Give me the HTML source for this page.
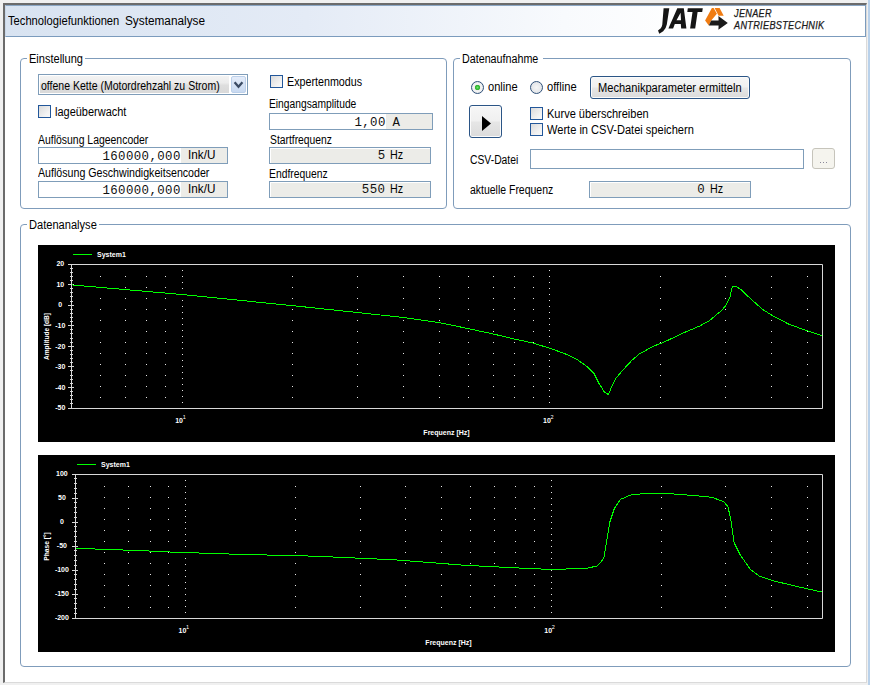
<!DOCTYPE html>
<html><head><meta charset="utf-8">
<style>
*{box-sizing:border-box}
html,body{margin:0;padding:0;width:870px;height:685px;overflow:hidden;background:#f0f0f0;font-family:'Liberation Sans', sans-serif;font-size:11px;color:#000}
.a{position:absolute}
.t{position:absolute;white-space:nowrap;font-size:11px;line-height:13px;color:#000}
.gb{position:absolute;border:1px solid #7f9cbb;border-radius:4px}
.cb{position:absolute;width:13px;height:13px;border:1px solid #22579a;background:linear-gradient(135deg,#dadada,#f3f3f3 70%,#f8f8f8)}
.fld{position:absolute;border:1px solid #7f9db9;background:#fff;height:17px;box-shadow:inset 1px 1px 0 #fff}
.num{position:absolute;font-family:'Liberation Mono', monospace;font-size:13px;line-height:15px;white-space:nowrap;color:#111}
svg text.ax{font:bold 7px 'Liberation Sans', sans-serif;fill:#fff}
svg text.ax2{font:5.5px 'Liberation Sans', sans-serif;fill:#fff}
svg text.axb{font:bold 7px 'Liberation Sans', sans-serif;fill:#fff}
</style></head><body>
<div class="a" style="left:3px;top:3px;width:864px;height:680px;background:#fff;border-left:2px solid #6b6b6b;border-top:2px solid #6b6b6b;border-bottom:1px solid #dadada;border-right:1px solid #dadada"></div>
<div class="a" style="left:868px;top:0;width:2px;height:685px;background:#b9d1ea"></div>
<div class="a" style="left:5px;top:5px;width:861px;height:32px;background:linear-gradient(90deg,#d8e3f1 0%,#e4ebf6 35%,#f8fafd 65%,#ffffff 80%);border:1px solid #7b9bbd;border-left:1px solid #c9d7e8;border-top:1px solid #8aa6c4"></div>
<div class="t" style="left:7.7px;top:13.74px;font-size:12px;line-height:14px;transform:scaleX(0.9319);transform-origin:0 0;">Technologiefunktionen</div>
<div class="t" style="left:124.9px;top:13.74px;font-size:12px;line-height:14px;transform:scaleX(0.9831);transform-origin:0 0;">Systemanalyse</div>
<svg class="a" style="left:650px;top:4px" width="85" height="32" viewBox="650 4 85 32">
<path d="M663.6,8.2L669.3,8.2L666.8,24.5Q666.2,28.2 663.2,31.2L659.3,33.8L658.0,30.6L660.8,28.2Q662.0,26.6 662.3,24.5Z" fill="#151515"/>
<path fill-rule="evenodd" d="M668.4,28.6L677.3,8.2L683.8,8.2L686.4,28.6L681.2,28.6L680.8,24.1L674.8,24.1L673.1,28.6Z M680.6,12.8L676.5,20.3L681.0,20.3Z" fill="#151515"/>
<path d="M687.8,8.2L702.8,8.2L702.2,11.9L697.6,11.9L695.2,28.6L690.1,28.6L692.5,11.9L687.3,11.9Z" fill="#151515"/>
<path d="M705.1,20.4L711.9,8.1L713.6,8.1L716.9,13.8L711.2,20.4L708.8,25.6Z" fill="#f07c12"/>
<path d="M714.6,8.1L719.6,8.1L723.7,15.8L718.6,15.8Z" fill="#f07c12"/>
<path d="M708.8,25.6L711.2,20.4L718.6,20.4L718.4,16.0L727.8,23.0L718.4,29.7L718.6,25.6Z" fill="#1a1a1a"/>
</svg>
<div class="a" style="left:733.6px;top:7.6px;font:italic 10.4px 'Liberation Sans', sans-serif;line-height:12px;color:#1a1a1a;letter-spacing:0.35px;-webkit-text-stroke:0.25px #1a1a1a;transform:scaleX(0.88);transform-origin:0 0">JENAER<br>ANTRIEBSTECHNIK</div>
<div class="gb" style="left:20px;top:58px;width:427px;height:151px"></div><div class="a" style="left:27px;top:57px;width:58px;height:3px;background:#fff"></div>
<div class="t" style="left:29.2px;top:51.84px;font-size:12px;line-height:14px;transform:scaleX(0.9196);transform-origin:0 0;">Einstellung</div>
<div class="a" style="left:38px;top:74px;width:210px;height:21px;border:1px solid #7f9db9;background:#fff"></div><div class="a" style="left:40px;top:76px;width:189px;height:17px;background:linear-gradient(#f3f3f3 0%,#ececec 40%,#dedede 55%,#d9d9d9 100%)"></div>
<div class="t" style="left:40.5px;top:78.84px;font-size:12px;line-height:14px;transform:scaleX(0.8765);transform-origin:0 0;">offene Kette (Motordrehzahl zu Strom)</div>
<div class="a" style="left:231px;top:76px;width:15px;height:17px;background:linear-gradient(#e4ecf9,#c8d9f1);border:1px solid #bcd0ea;border-radius:2px"></div>
<svg class="a" style="left:230px;top:76px" width="18" height="18" viewBox="230 76 18 18"><path d="M234.6,82.3 L238.5,86.7 L242.4,82.3" fill="none" stroke="#3b4b64" stroke-width="2.3"/></svg>
<div class="cb" style="left:38px;top:105px"></div>
<div class="t" style="left:54.5px;top:104.84px;font-size:12px;line-height:14px;transform:scaleX(0.9147);transform-origin:0 0;">lageüberwacht</div>
<div class="t" style="left:38.4px;top:132.74px;font-size:12px;line-height:14px;transform:scaleX(0.8700);transform-origin:0 0;">Auflösung Lageencoder</div>
<div class="fld" style="left:38px;top:147px;width:190px;height:17px;background:#fff"></div>
<div class="a" style="left:181px;top:148px;width:46px;height:15px;background:#ecece8"></div>
<div class="num" style="left:102.4px;top:149.6px;font-size:12.4px;line-height:14.4px;letter-spacing:0.4px;">160000,000</div>
<div class="t" style="left:187.5px;top:148.24px;font-size:12px;line-height:14px;transform:scaleX(0.9780);transform-origin:0 0;">Ink/U</div>
<div class="t" style="left:37.6px;top:165.64px;font-size:12px;line-height:14px;transform:scaleX(0.8860);transform-origin:0 0;">Auflösung Geschwindigkeitsencoder</div>
<div class="fld" style="left:38px;top:181px;width:190px;height:17px;background:#fff"></div>
<div class="a" style="left:181px;top:182px;width:46px;height:15px;background:#ecece8"></div>
<div class="num" style="left:102.4px;top:183.6px;font-size:12.4px;line-height:14.4px;letter-spacing:0.4px;">160000,000</div>
<div class="t" style="left:187.5px;top:182.24px;font-size:12px;line-height:14px;transform:scaleX(0.9780);transform-origin:0 0;">Ink/U</div>
<div class="cb" style="left:270px;top:75px"></div>
<div class="t" style="left:287.2px;top:74.74px;font-size:12px;line-height:14px;transform:scaleX(0.8935);transform-origin:0 0;">Expertenmodus</div>
<div class="t" style="left:269.2px;top:96.84px;font-size:12px;line-height:14px;transform:scaleX(0.8552);transform-origin:0 0;">Eingangsamplitude</div>
<div class="fld" style="left:269px;top:113px;width:164px;height:17px;background:#fff"></div>
<div class="a" style="left:386px;top:114px;width:46px;height:15px;background:#ecece8"></div>
<div class="num" style="left:354.4px;top:116.2px;font-size:12.4px;line-height:14.4px;letter-spacing:0.4px;">1,00</div>
<div class="num" style="left:392.5px;top:115.5px;font-size:12.4px;line-height:14.4px;letter-spacing:0.4px;">A</div>
<div class="t" style="left:269.6px;top:132.94px;font-size:12px;line-height:14px;transform:scaleX(0.8606);transform-origin:0 0;">Startfrequenz</div>
<div class="fld" style="left:269px;top:147px;width:162px;height:17px;background:#ecece8"></div>
<div class="num" style="left:377.8px;top:149.2px;font-size:12.4px;line-height:14.4px;letter-spacing:0.4px;">5</div>
<div class="t" style="left:390.2px;top:147.64px;font-size:12px;line-height:14px;transform:scaleX(0.8929);transform-origin:0 0;">Hz</div>
<div class="t" style="left:269.0px;top:166.64px;font-size:12px;line-height:14px;transform:scaleX(0.8610);transform-origin:0 0;">Endfrequenz</div>
<div class="fld" style="left:269px;top:181px;width:162px;height:17px;background:#ecece8"></div>
<div class="num" style="left:361.8px;top:183.2px;font-size:12.4px;line-height:14.4px;letter-spacing:0.4px;">550</div>
<div class="t" style="left:390.2px;top:181.64px;font-size:12px;line-height:14px;transform:scaleX(0.8929);transform-origin:0 0;">Hz</div>
<div class="gb" style="left:453px;top:58px;width:398px;height:151px"></div><div class="a" style="left:460px;top:57px;width:83px;height:3px;background:#fff"></div>
<div class="t" style="left:461.9px;top:51.64px;font-size:12px;line-height:14px;transform:scaleX(0.8934);transform-origin:0 0;">Datenaufnahme</div>
<div class="a" style="left:471px;top:81px;width:13px;height:13px;border-radius:50%;border:1px solid #2f5179;background:radial-gradient(circle,#6ee66e 0,#2db82d 1.9px,#4ab04a 2.5px,#eef0ee 3px,#f4f4f4 4px,#dfe2e6 6px)"></div>
<div class="t" style="left:487.6px;top:79.84px;font-size:12px;line-height:14px;transform:scaleX(0.9241);transform-origin:0 0;">online</div>
<div class="a" style="left:530px;top:81px;width:13px;height:13px;border-radius:50%;border:1px solid #2f5179;background:radial-gradient(circle,#f6f6f6,#dadee3)"></div>
<div class="t" style="left:546.5px;top:79.84px;font-size:12px;line-height:14px;transform:scaleX(0.9305);transform-origin:0 0;">offline</div>
<div class="a" style="left:590px;top:76px;width:160px;height:23px;border:1px solid #2b5586;border-radius:3px;box-shadow:inset 0 0 0 1px #fbfbfb;background:linear-gradient(#f6f6f6,#f0f0f0 48%,#e6e6e6 52%,#dbdbdb)"></div>
<div class="t" style="left:597.7px;top:80.54px;font-size:12px;line-height:14px;transform:scaleX(0.9240);transform-origin:0 0;">Mechanikparameter ermitteln</div>
<div class="a" style="left:469px;top:105px;width:33px;height:33px;border:1px solid #2b5586;border-radius:3px;box-shadow:inset 0 0 0 1px #fbfbfb;background:linear-gradient(#f6f6f6,#f0f0f0 48%,#e6e6e6 52%,#dbdbdb)"></div>
<svg class="a" style="left:469px;top:105px" width="33" height="33"><polygon points="13,11 22,18.5 13,26" fill="#000"/></svg>
<div class="cb" style="left:530px;top:107px"></div>
<div class="t" style="left:547.1px;top:106.84px;font-size:12px;line-height:14px;transform:scaleX(0.9184);transform-origin:0 0;">Kurve überschreiben</div>
<div class="cb" style="left:530px;top:123px"></div>
<div class="t" style="left:547.1px;top:122.84px;font-size:12px;line-height:14px;transform:scaleX(0.9222);transform-origin:0 0;">Werte in CSV-Datei speichern</div>
<div class="t" style="left:470.2px;top:152.84px;font-size:12px;line-height:14px;transform:scaleX(0.8620);transform-origin:0 0;">CSV-Datei</div>
<div class="fld" style="left:530px;top:149px;width:274px;height:20px;background:#fff"></div>
<div class="a" style="left:812px;top:148px;width:23px;height:21px;border:1px solid #c6c4bb;border-radius:3px;background:#f5f4ee"></div><svg class="a" style="left:812px;top:148px" width="23" height="21"><path d="M8,14h1v1h-1zM11,14h1v1h-1zM14,14h1v1h-1z" fill="#8a889a"/></svg>
<div class="t" style="left:470.2px;top:183.14px;font-size:12px;line-height:14px;transform:scaleX(0.8722);transform-origin:0 0;">aktuelle Frequenz</div>
<div class="fld" style="left:589px;top:181px;width:162px;height:17px;background:#ecece8"></div>
<div class="num" style="left:697.3px;top:183.2px;font-size:12.4px;line-height:14.4px;letter-spacing:0.4px;">0</div>
<div class="t" style="left:710.2px;top:181.64px;font-size:12px;line-height:14px;transform:scaleX(0.8929);transform-origin:0 0;">Hz</div>
<div class="gb" style="left:20px;top:224px;width:831px;height:443px"></div><div class="a" style="left:27px;top:223px;width:72px;height:3px;background:#fff"></div>
<div class="t" style="left:28.8px;top:218.24px;font-size:12px;line-height:14px;transform:scaleX(0.9238);transform-origin:0 0;">Datenanalyse</div>
<svg class="a" style="left:0;top:0" width="870" height="685">
<rect x="38" y="245" width="797" height="197" fill="#000"/>
<path d="M100,276h1v1h-1zM100,287h1v1h-1zM100,298h1v1h-1zM100,309h1v1h-1zM100,320h1v1h-1zM100,331h1v1h-1zM100,342h1v1h-1zM100,353h1v1h-1zM100,364h1v1h-1zM100,375h1v1h-1zM100,386h1v1h-1zM100,397h1v1h-1zM125,276h1v1h-1zM125,287h1v1h-1zM125,298h1v1h-1zM125,309h1v1h-1zM125,320h1v1h-1zM125,331h1v1h-1zM125,342h1v1h-1zM125,353h1v1h-1zM125,364h1v1h-1zM125,375h1v1h-1zM125,386h1v1h-1zM125,397h1v1h-1zM146,276h1v1h-1zM146,287h1v1h-1zM146,298h1v1h-1zM146,309h1v1h-1zM146,320h1v1h-1zM146,331h1v1h-1zM146,342h1v1h-1zM146,353h1v1h-1zM146,364h1v1h-1zM146,375h1v1h-1zM146,386h1v1h-1zM146,397h1v1h-1zM165,276h1v1h-1zM165,287h1v1h-1zM165,298h1v1h-1zM165,309h1v1h-1zM165,320h1v1h-1zM165,331h1v1h-1zM165,342h1v1h-1zM165,353h1v1h-1zM165,364h1v1h-1zM165,375h1v1h-1zM165,386h1v1h-1zM165,397h1v1h-1zM292,276h1v1h-1zM292,287h1v1h-1zM292,298h1v1h-1zM292,309h1v1h-1zM292,320h1v1h-1zM292,331h1v1h-1zM292,342h1v1h-1zM292,353h1v1h-1zM292,364h1v1h-1zM292,375h1v1h-1zM292,386h1v1h-1zM292,397h1v1h-1zM357,276h1v1h-1zM357,287h1v1h-1zM357,298h1v1h-1zM357,309h1v1h-1zM357,320h1v1h-1zM357,331h1v1h-1zM357,342h1v1h-1zM357,353h1v1h-1zM357,364h1v1h-1zM357,375h1v1h-1zM357,386h1v1h-1zM357,397h1v1h-1zM403,276h1v1h-1zM403,287h1v1h-1zM403,298h1v1h-1zM403,309h1v1h-1zM403,320h1v1h-1zM403,331h1v1h-1zM403,342h1v1h-1zM403,353h1v1h-1zM403,364h1v1h-1zM403,375h1v1h-1zM403,386h1v1h-1zM403,397h1v1h-1zM439,276h1v1h-1zM439,287h1v1h-1zM439,298h1v1h-1zM439,309h1v1h-1zM439,320h1v1h-1zM439,331h1v1h-1zM439,342h1v1h-1zM439,353h1v1h-1zM439,364h1v1h-1zM439,375h1v1h-1zM439,386h1v1h-1zM439,397h1v1h-1zM468,276h1v1h-1zM468,287h1v1h-1zM468,298h1v1h-1zM468,309h1v1h-1zM468,320h1v1h-1zM468,331h1v1h-1zM468,342h1v1h-1zM468,353h1v1h-1zM468,364h1v1h-1zM468,375h1v1h-1zM468,386h1v1h-1zM468,397h1v1h-1zM493,276h1v1h-1zM493,287h1v1h-1zM493,298h1v1h-1zM493,309h1v1h-1zM493,320h1v1h-1zM493,331h1v1h-1zM493,342h1v1h-1zM493,353h1v1h-1zM493,364h1v1h-1zM493,375h1v1h-1zM493,386h1v1h-1zM493,397h1v1h-1zM514,276h1v1h-1zM514,287h1v1h-1zM514,298h1v1h-1zM514,309h1v1h-1zM514,320h1v1h-1zM514,331h1v1h-1zM514,342h1v1h-1zM514,353h1v1h-1zM514,364h1v1h-1zM514,375h1v1h-1zM514,386h1v1h-1zM514,397h1v1h-1zM533,276h1v1h-1zM533,287h1v1h-1zM533,298h1v1h-1zM533,309h1v1h-1zM533,320h1v1h-1zM533,331h1v1h-1zM533,342h1v1h-1zM533,353h1v1h-1zM533,364h1v1h-1zM533,375h1v1h-1zM533,386h1v1h-1zM533,397h1v1h-1zM660,276h1v1h-1zM660,287h1v1h-1zM660,298h1v1h-1zM660,309h1v1h-1zM660,320h1v1h-1zM660,331h1v1h-1zM660,342h1v1h-1zM660,353h1v1h-1zM660,364h1v1h-1zM660,375h1v1h-1zM660,386h1v1h-1zM660,397h1v1h-1zM725,276h1v1h-1zM725,287h1v1h-1zM725,298h1v1h-1zM725,309h1v1h-1zM725,320h1v1h-1zM725,331h1v1h-1zM725,342h1v1h-1zM725,353h1v1h-1zM725,364h1v1h-1zM725,375h1v1h-1zM725,386h1v1h-1zM725,397h1v1h-1zM771,276h1v1h-1zM771,287h1v1h-1zM771,298h1v1h-1zM771,309h1v1h-1zM771,320h1v1h-1zM771,331h1v1h-1zM771,342h1v1h-1zM771,353h1v1h-1zM771,364h1v1h-1zM771,375h1v1h-1zM771,386h1v1h-1zM771,397h1v1h-1zM807,276h1v1h-1zM807,287h1v1h-1zM807,298h1v1h-1zM807,309h1v1h-1zM807,320h1v1h-1zM807,331h1v1h-1zM807,342h1v1h-1zM807,353h1v1h-1zM807,364h1v1h-1zM807,375h1v1h-1zM807,386h1v1h-1zM807,397h1v1h-1zM182,270h1v1h-1zM182,276h1v1h-1zM182,282h1v1h-1zM182,288h1v1h-1zM182,294h1v1h-1zM182,300h1v1h-1zM182,306h1v1h-1zM182,312h1v1h-1zM182,318h1v1h-1zM182,324h1v1h-1zM182,330h1v1h-1zM182,336h1v1h-1zM182,342h1v1h-1zM182,348h1v1h-1zM182,354h1v1h-1zM182,360h1v1h-1zM182,366h1v1h-1zM182,372h1v1h-1zM182,378h1v1h-1zM182,384h1v1h-1zM182,390h1v1h-1zM182,396h1v1h-1zM182,402h1v1h-1zM549,270h1v1h-1zM549,276h1v1h-1zM549,282h1v1h-1zM549,288h1v1h-1zM549,294h1v1h-1zM549,300h1v1h-1zM549,306h1v1h-1zM549,312h1v1h-1zM549,318h1v1h-1zM549,324h1v1h-1zM549,330h1v1h-1zM549,336h1v1h-1zM549,342h1v1h-1zM549,348h1v1h-1zM549,354h1v1h-1zM549,360h1v1h-1zM549,366h1v1h-1zM549,372h1v1h-1zM549,378h1v1h-1zM549,384h1v1h-1zM549,390h1v1h-1zM549,396h1v1h-1zM549,402h1v1h-1z" fill="#e6e6e6"/>
<path d="M69,264.5H822.5V408.5H71.5V264" fill="none" stroke="#d8d8d8" stroke-width="1"/>
<path d="M68,264.5h6M70,268.5h3M70,272.5h3M70,276.5h3M70,280.5h3M68,284.5h6M70,288.5h3M70,292.5h3M70,296.5h3M70,301.5h3M68,305.5h6M70,309.5h3M70,313.5h3M70,317.5h3M70,321.5h3M68,325.5h6M70,329.5h3M70,333.5h3M70,338.5h3M70,342.5h3M68,346.5h6M70,350.5h3M70,354.5h3M70,358.5h3M70,362.5h3M68,366.5h6M70,370.5h3M70,375.5h3M70,379.5h3M70,383.5h3M68,387.5h6M70,391.5h3M70,395.5h3M70,399.5h3M70,403.5h3M68,408.5h6" stroke="#d8d8d8" stroke-width="1"/>
<text x="60.3" y="266" text-anchor="middle" class="ax">20</text>
<text x="60.3" y="287" text-anchor="middle" class="ax">10</text>
<text x="60.3" y="307" text-anchor="middle" class="ax">0</text>
<text x="60.3" y="328" text-anchor="middle" class="ax">-10</text>
<text x="60.3" y="349" text-anchor="middle" class="ax">-20</text>
<text x="60.3" y="369" text-anchor="middle" class="ax">-30</text>
<text x="60.3" y="390" text-anchor="middle" class="ax">-40</text>
<text x="60.3" y="410" text-anchor="middle" class="ax">-50</text>
<text x="175.184" y="423" class="ax">10</text><text x="182.684" y="418.8" class="ax2">1</text>
<text x="542.994" y="423" class="ax">10</text><text x="550.494" y="418.8" class="ax2">2</text>
<text x="446.5" y="435" text-anchor="middle" class="axb">Frequenz [Hz]</text>
<text transform="translate(49.3,336.5) rotate(-90)" text-anchor="middle" class="axb" textLength="47" lengthAdjust="spacingAndGlyphs">Amplitude [dB]</text>
<path d="M73,254.5h19" stroke="#00ff00" stroke-width="1"/>
<text x="97" y="257" class="axb">System1</text>
<polyline points="71.5,284.9 181.8,294.5 292.2,305.6 357.5,312.5 403.4,317.5 439.3,322.6 468.7,328.7 492.4,333.8 514.7,339.1 533.1,343 549.7,348.3 564.1,353.3 576.8,359.3 587.1,366.7 594,373.6 598.6,382.8 604.4,392 608.5,394.7 611.3,387.4 615.9,378.2 623.9,369 632,360.2 639.3,354 653.8,346 663.4,342.4 682.8,333.2 699.7,326 709.3,320.7 721.4,310.6 726.2,305 729.8,297.8 732.2,286.9 735.9,286.4 740.7,289.3 750.3,298.5 762.4,309.3 772.1,315.4 789,324.3 805.9,330.3 822,335.7" fill="none" stroke="#00ff00" stroke-width="1" shape-rendering="crispEdges"/>
<rect x="38" y="455" width="797" height="197" fill="#000"/>
<path d="M104,486h1v1h-1zM104,497h1v1h-1zM104,508h1v1h-1zM104,519h1v1h-1zM104,530h1v1h-1zM104,541h1v1h-1zM104,552h1v1h-1zM104,563h1v1h-1zM104,574h1v1h-1zM104,585h1v1h-1zM104,596h1v1h-1zM104,607h1v1h-1zM128,486h1v1h-1zM128,497h1v1h-1zM128,508h1v1h-1zM128,519h1v1h-1zM128,530h1v1h-1zM128,541h1v1h-1zM128,552h1v1h-1zM128,563h1v1h-1zM128,574h1v1h-1zM128,585h1v1h-1zM128,596h1v1h-1zM128,607h1v1h-1zM150,486h1v1h-1zM150,497h1v1h-1zM150,508h1v1h-1zM150,519h1v1h-1zM150,530h1v1h-1zM150,541h1v1h-1zM150,552h1v1h-1zM150,563h1v1h-1zM150,574h1v1h-1zM150,585h1v1h-1zM150,596h1v1h-1zM150,607h1v1h-1zM168,486h1v1h-1zM168,497h1v1h-1zM168,508h1v1h-1zM168,519h1v1h-1zM168,530h1v1h-1zM168,541h1v1h-1zM168,552h1v1h-1zM168,563h1v1h-1zM168,574h1v1h-1zM168,585h1v1h-1zM168,596h1v1h-1zM168,607h1v1h-1zM295,486h1v1h-1zM295,497h1v1h-1zM295,508h1v1h-1zM295,519h1v1h-1zM295,530h1v1h-1zM295,541h1v1h-1zM295,552h1v1h-1zM295,563h1v1h-1zM295,574h1v1h-1zM295,585h1v1h-1zM295,596h1v1h-1zM295,607h1v1h-1zM360,486h1v1h-1zM360,497h1v1h-1zM360,508h1v1h-1zM360,519h1v1h-1zM360,530h1v1h-1zM360,541h1v1h-1zM360,552h1v1h-1zM360,563h1v1h-1zM360,574h1v1h-1zM360,585h1v1h-1zM360,596h1v1h-1zM360,607h1v1h-1zM405,486h1v1h-1zM405,497h1v1h-1zM405,508h1v1h-1zM405,519h1v1h-1zM405,530h1v1h-1zM405,541h1v1h-1zM405,552h1v1h-1zM405,563h1v1h-1zM405,574h1v1h-1zM405,585h1v1h-1zM405,596h1v1h-1zM405,607h1v1h-1zM441,486h1v1h-1zM441,497h1v1h-1zM441,508h1v1h-1zM441,519h1v1h-1zM441,530h1v1h-1zM441,541h1v1h-1zM441,552h1v1h-1zM441,563h1v1h-1zM441,574h1v1h-1zM441,585h1v1h-1zM441,596h1v1h-1zM441,607h1v1h-1zM470,486h1v1h-1zM470,497h1v1h-1zM470,508h1v1h-1zM470,519h1v1h-1zM470,530h1v1h-1zM470,541h1v1h-1zM470,552h1v1h-1zM470,563h1v1h-1zM470,574h1v1h-1zM470,585h1v1h-1zM470,596h1v1h-1zM470,607h1v1h-1zM494,486h1v1h-1zM494,497h1v1h-1zM494,508h1v1h-1zM494,519h1v1h-1zM494,530h1v1h-1zM494,541h1v1h-1zM494,552h1v1h-1zM494,563h1v1h-1zM494,574h1v1h-1zM494,585h1v1h-1zM494,596h1v1h-1zM494,607h1v1h-1zM515,486h1v1h-1zM515,497h1v1h-1zM515,508h1v1h-1zM515,519h1v1h-1zM515,530h1v1h-1zM515,541h1v1h-1zM515,552h1v1h-1zM515,563h1v1h-1zM515,574h1v1h-1zM515,585h1v1h-1zM515,596h1v1h-1zM515,607h1v1h-1zM534,486h1v1h-1zM534,497h1v1h-1zM534,508h1v1h-1zM534,519h1v1h-1zM534,530h1v1h-1zM534,541h1v1h-1zM534,552h1v1h-1zM534,563h1v1h-1zM534,574h1v1h-1zM534,585h1v1h-1zM534,596h1v1h-1zM534,607h1v1h-1zM661,486h1v1h-1zM661,497h1v1h-1zM661,508h1v1h-1zM661,519h1v1h-1zM661,530h1v1h-1zM661,541h1v1h-1zM661,552h1v1h-1zM661,563h1v1h-1zM661,574h1v1h-1zM661,585h1v1h-1zM661,596h1v1h-1zM661,607h1v1h-1zM725,486h1v1h-1zM725,497h1v1h-1zM725,508h1v1h-1zM725,519h1v1h-1zM725,530h1v1h-1zM725,541h1v1h-1zM725,552h1v1h-1zM725,563h1v1h-1zM725,574h1v1h-1zM725,585h1v1h-1zM725,596h1v1h-1zM725,607h1v1h-1zM771,486h1v1h-1zM771,497h1v1h-1zM771,508h1v1h-1zM771,519h1v1h-1zM771,530h1v1h-1zM771,541h1v1h-1zM771,552h1v1h-1zM771,563h1v1h-1zM771,574h1v1h-1zM771,585h1v1h-1zM771,596h1v1h-1zM771,607h1v1h-1zM807,486h1v1h-1zM807,497h1v1h-1zM807,508h1v1h-1zM807,519h1v1h-1zM807,530h1v1h-1zM807,541h1v1h-1zM807,552h1v1h-1zM807,563h1v1h-1zM807,574h1v1h-1zM807,585h1v1h-1zM807,596h1v1h-1zM807,607h1v1h-1zM185,480h1v1h-1zM185,486h1v1h-1zM185,492h1v1h-1zM185,498h1v1h-1zM185,504h1v1h-1zM185,510h1v1h-1zM185,516h1v1h-1zM185,522h1v1h-1zM185,528h1v1h-1zM185,534h1v1h-1zM185,540h1v1h-1zM185,546h1v1h-1zM185,552h1v1h-1zM185,558h1v1h-1zM185,564h1v1h-1zM185,570h1v1h-1zM185,576h1v1h-1zM185,582h1v1h-1zM185,588h1v1h-1zM185,594h1v1h-1zM185,600h1v1h-1zM185,606h1v1h-1zM185,612h1v1h-1zM551,480h1v1h-1zM551,486h1v1h-1zM551,492h1v1h-1zM551,498h1v1h-1zM551,504h1v1h-1zM551,510h1v1h-1zM551,516h1v1h-1zM551,522h1v1h-1zM551,528h1v1h-1zM551,534h1v1h-1zM551,540h1v1h-1zM551,546h1v1h-1zM551,552h1v1h-1zM551,558h1v1h-1zM551,564h1v1h-1zM551,570h1v1h-1zM551,576h1v1h-1zM551,582h1v1h-1zM551,588h1v1h-1zM551,594h1v1h-1zM551,600h1v1h-1zM551,606h1v1h-1zM551,612h1v1h-1z" fill="#e6e6e6"/>
<path d="M73,474.5H822.5V618.5H75.5V474" fill="none" stroke="#d8d8d8" stroke-width="1"/>
<path d="M72,474.5h6M74,478.5h3M74,483.5h3M74,488.5h3M74,493.5h3M72,498.5h6M74,502.5h3M74,507.5h3M74,512.5h3M74,517.5h3M72,522.5h6M74,526.5h3M74,531.5h3M74,536.5h3M74,541.5h3M72,546.5h6M74,550.5h3M74,555.5h3M74,560.5h3M74,565.5h3M72,570.5h6M74,574.5h3M74,579.5h3M74,584.5h3M74,589.5h3M72,594.5h6M74,598.5h3M74,603.5h3M74,608.5h3M74,613.5h3M72,618.5h6" stroke="#d8d8d8" stroke-width="1"/>
<text x="61.9" y="476" text-anchor="middle" class="ax">100</text>
<text x="61.9" y="500" text-anchor="middle" class="ax">50</text>
<text x="61.9" y="524" text-anchor="middle" class="ax">0</text>
<text x="61.9" y="548" text-anchor="middle" class="ax">-50</text>
<text x="61.9" y="572" text-anchor="middle" class="ax">-100</text>
<text x="61.9" y="596" text-anchor="middle" class="ax">-150</text>
<text x="61.9" y="620" text-anchor="middle" class="ax">-200</text>
<text x="178.51399999999998" y="633" class="ax">10</text><text x="186.01399999999998" y="628.8" class="ax2">1</text>
<text x="544.3489999999999" y="633" class="ax">10</text><text x="551.8489999999999" y="628.8" class="ax2">2</text>
<text x="448.5" y="645" text-anchor="middle" class="axb">Frequenz [Hz]</text>
<text transform="translate(49.3,546.5) rotate(-90)" text-anchor="middle" class="axb" textLength="28.5" lengthAdjust="spacingAndGlyphs">Phase [°]</text>
<path d="M77,464.5h19" stroke="#00ff00" stroke-width="1"/>
<text x="101" y="467" class="axb">System1</text>
<polyline points="75.6,548.3 144.5,550.8 172.4,552.1 234.5,554.2 312,556.1 340,557.3 394.4,559.8 465.2,565.3 523.1,568.2 552.1,569.5 587.5,568.2 597.1,565.9 601,562 603.9,557.7 606.9,539.8 609.9,521.8 614.4,508.3 620.4,499.4 630.9,494.9 642.8,493.7 669.8,493.7 693.7,495.5 711.7,497.3 723.6,501.5 728.1,506.9 731.1,521.8 734.1,542.8 740.1,554.7 750.6,569.7 759.5,576.3 774.5,581.1 795.4,586.1 822,592.1" fill="none" stroke="#00ff00" stroke-width="1" shape-rendering="crispEdges"/>
</svg>
</body></html>
